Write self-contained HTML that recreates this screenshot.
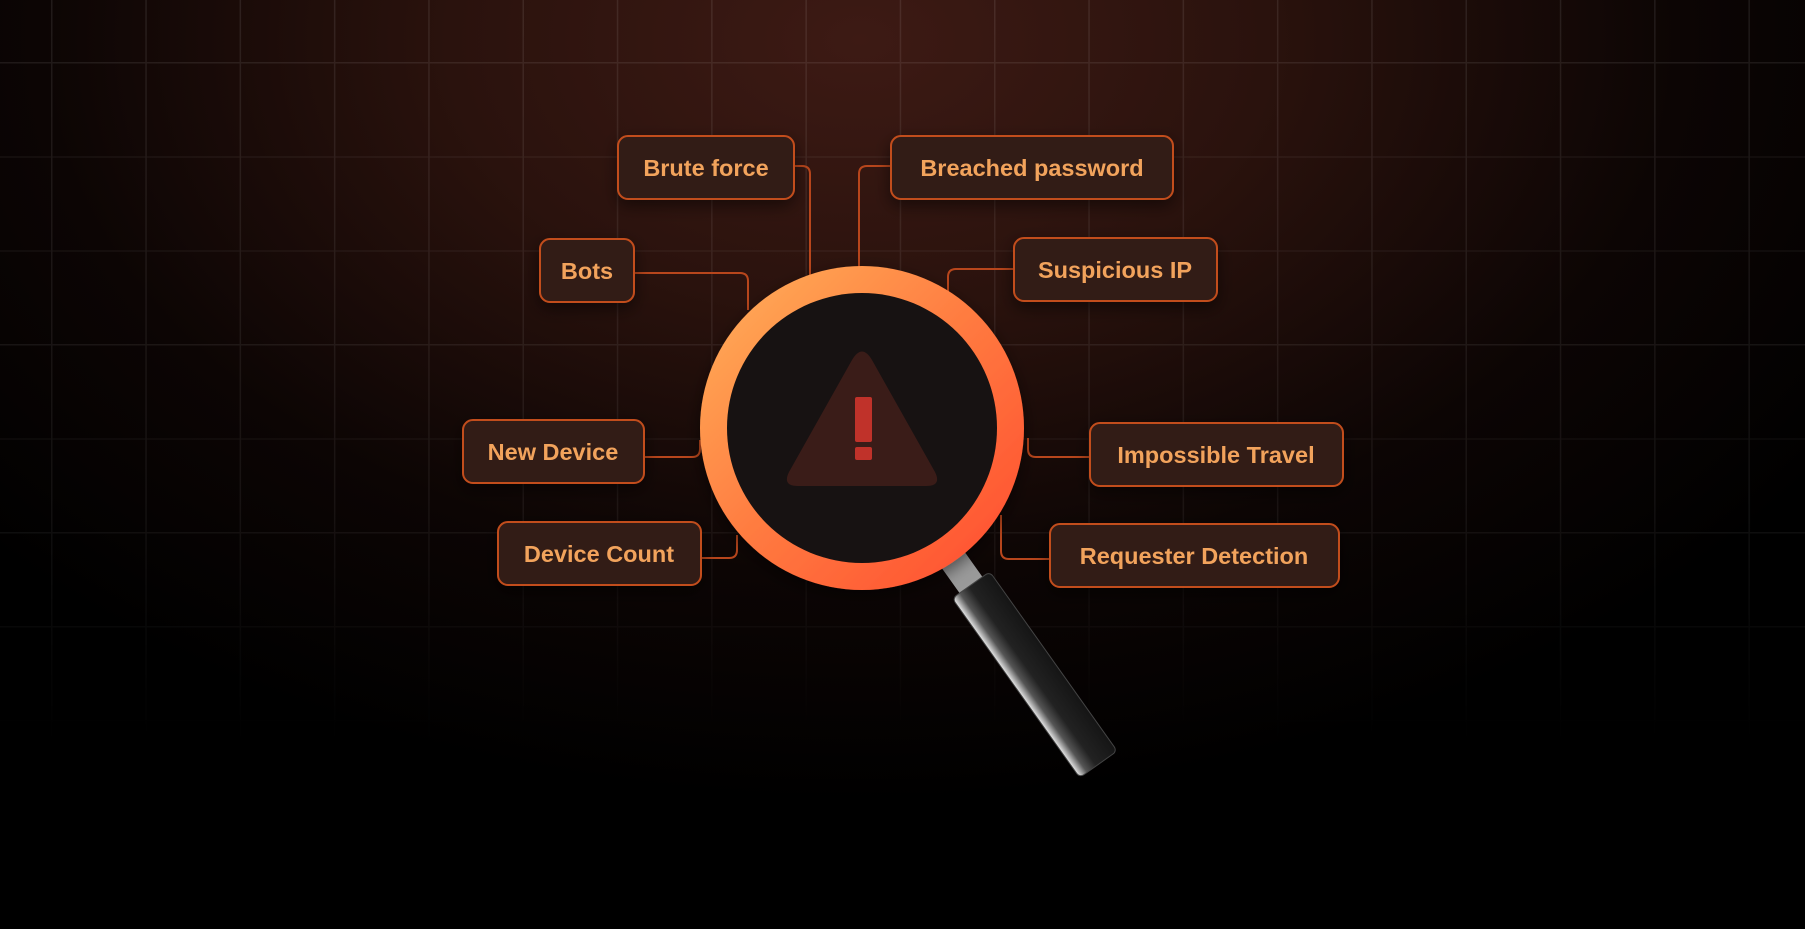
<!DOCTYPE html>
<html><head><meta charset="utf-8"><style>
html,body{margin:0;padding:0;background:#000;}
body{width:1805px;height:929px;overflow:hidden;position:relative;font-family:"Liberation Sans",sans-serif;}
</style></head><body>
<svg width="1805" height="929" viewBox="0 0 1805 929" xmlns="http://www.w3.org/2000/svg" style="position:absolute;left:0;top:0">
<defs>
<radialGradient id="bg" cx="860" cy="40" r="900" gradientUnits="userSpaceOnUse" gradientTransform="translate(860 40) scale(1.3 0.85) translate(-860 -40)">
<stop offset="0" stop-color="#3d1a14"/>
<stop offset="0.35" stop-color="#2a120d"/>
<stop offset="0.7" stop-color="#0c0504"/>
<stop offset="1" stop-color="#000"/>
</radialGradient>
<linearGradient id="gridfade" x1="0" y1="0" x2="0" y2="1">
<stop offset="0" stop-color="#fff" stop-opacity="1"/>
<stop offset="0.55" stop-color="#fff" stop-opacity="0.7"/>
<stop offset="0.8" stop-color="#fff" stop-opacity="0"/>
</linearGradient>
<mask id="gm"><rect width="1805" height="929" fill="url(#gridfade)"/></mask>
<pattern id="grid" x="51" y="62" width="94.3" height="94" patternUnits="userSpaceOnUse">
<path d="M0 0.75H94.3M0.75 0V94" stroke="#ffffff" stroke-opacity="0.085" stroke-width="1.5" fill="none"/>
</pattern>
<linearGradient id="ring" x1="0" y1="0" x2="1" y2="1">
<stop offset="0" stop-color="#ffb25a"/>
<stop offset="0.5" stop-color="#ff7a40"/>
<stop offset="1" stop-color="#ff4a2e"/>
</linearGradient>
<linearGradient id="handle" x1="0" y1="0" x2="1" y2="0">
<stop offset="0" stop-color="#e8e8e8"/>
<stop offset="0.2" stop-color="#555"/>
<stop offset="0.45" stop-color="#222"/>
<stop offset="1" stop-color="#151515"/>
</linearGradient>
<filter id="sh" x="-30%" y="-30%" width="160%" height="160%"><feDropShadow dx="0" dy="6" stdDeviation="8" flood-color="#000" flood-opacity="0.5"/></filter>
</defs>
<rect width="1805" height="929" fill="url(#bg)"/>
<rect width="1805" height="929" fill="url(#grid)" mask="url(#gm)"/>

<g fill="none" stroke="#b8461c" stroke-width="2">
<path d="M794 166 H802 Q810 166 810 174 V275"/>
<path d="M891 166 H867 Q859 166 859 174 V268"/>
<path d="M634 273 H740 Q748 273 748 281 V310"/>
<path d="M1014 269 H956 Q948 269 948 277 V305"/>
<path d="M644 457 H692 Q700 457 700 449 V440"/>
<path d="M1090 457 H1036 Q1028 457 1028 449 V438"/>
<path d="M701 558 H729 Q737 558 737 550 V535"/>
<path d="M1050 559 H1009 Q1001 559 1001 551 V515"/>
</g>

<g transform="translate(971 585) rotate(-35.4)">
<rect x="-14" y="-50" width="28" height="50" fill="#9a9a9a"/>
<rect x="-23" y="0" width="46" height="220" rx="5" fill="url(#handle)" stroke="#444" stroke-width="1"/>
</g>

<circle cx="862" cy="428" r="162" fill="url(#ring)" filter="url(#sh)"/>
<circle cx="862" cy="428" r="135" fill="#171212"/>
<path d="M852 360 Q862 343 872 360 L935 472 Q942 486 926 486 H798 Q782 486 789 472 Z" fill="#3a1c18"/>
<rect x="855" y="397" width="17" height="45" rx="2" fill="#c0322a"/>
<rect x="855" y="447" width="17" height="13" rx="2" fill="#c0322a"/>

<g font-family="Liberation Sans, sans-serif" font-size="23.5" font-weight="bold" fill="#f2a35c" text-anchor="middle">
<g stroke="#c24d1e" stroke-width="2" fill="#321c12" filter="url(#sh)">
<rect x="618" y="136" width="176" height="63" rx="10"/>
<rect x="891" y="136" width="282" height="63" rx="10"/>
<rect x="540" y="239" width="94" height="63" rx="10"/>
<rect x="1014" y="238" width="203" height="63" rx="10"/>
<rect x="463" y="420" width="181" height="63" rx="10"/>
<rect x="1090" y="423" width="253" height="63" rx="10"/>
<rect x="498" y="522" width="203" height="63" rx="10"/>
<rect x="1050" y="524" width="289" height="63" rx="10"/>
</g>
<text x="706" y="176">Brute force</text>
<text x="1032" y="176">Breached password</text>
<text x="587" y="279">Bots</text>
<text x="1115" y="278">Suspicious IP</text>
<text x="553" y="460">New Device</text>
<text x="1216" y="463">Impossible Travel</text>
<text x="599" y="562">Device Count</text>
<text x="1194" y="564">Requester Detection</text>
</g>
</svg>
</body></html>
